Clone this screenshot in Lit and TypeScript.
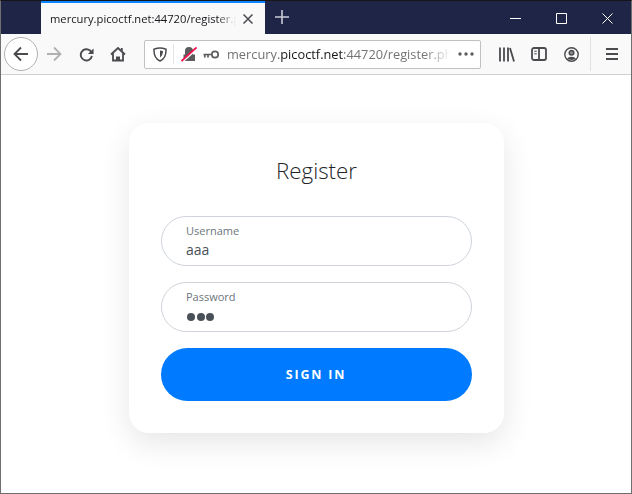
import { LitElement, css, html } from "lit";
import { customElement } from "lit/decorators.js";

@customElement("app-root")
export class AppRoot extends LitElement {
  static styles = css`
    :host {
      display: block;
      width: 632px;
      height: 494px;
      font-family: "Open Sans", "Noto Sans", sans-serif;
    }
    svg {
      display: block;
      fill: none;
      flex: none;
    }
    .window {
      position: relative;
      box-sizing: border-box;
      width: 632px;
      height: 494px;
      display: flex;
      flex-direction: column;
      border: 1px solid #6f6f6f;
      border-top-color: #15151c;
      background: #fff;
      overflow: hidden;
    }
    /* bits of the desktop that show through the window edge */
    .edge {
      position: absolute;
      width: 1px;
      background: #3f7a1e;
    }
    .edge.left {
      left: -1px;
    }
    .edge.right {
      right: -1px;
      background: #56642f;
    }
    .titlebar {
      height: 33px;
      flex: none;
      display: flex;
      background: #1f2546;
    }
    .tab {
      margin-left: 40px;
      width: 224px;
      box-sizing: border-box;
      background: #f9f9fa;
      border-top: 2px solid #0a84ff;
      display: flex;
      align-items: center;
      padding-left: 9px;
    }
    .tab-title {
      width: 186px;
      font-size: 11.2px;
      color: #17171a;
      white-space: nowrap;
      overflow: hidden;
      -webkit-mask-image: linear-gradient(90deg, #000 90%, transparent 100%);
      mask-image: linear-gradient(90deg, #000 90%, transparent 100%);
    }
    .tab-close {
      margin-left: 7px;
    }
    .new-tab {
      margin-left: 10px;
      margin-top: 9px;
    }
    .win-controls {
      margin-left: auto;
      display: flex;
      align-items: center;
      padding: 1px 18px 0 0;
      gap: 35px;
    }
    .toolbar {
      height: 41px;
      flex: none;
      box-sizing: border-box;
      display: flex;
      align-items: center;
      background: #f9f9fa;
      border-bottom: 1px solid #d0d0d2;
      padding-left: 3px;
    }
    .back {
      width: 32px;
      height: 32px;
      border: 1px solid #b1b1b3;
      border-radius: 50%;
      background: #fff;
      display: grid;
      place-items: center;
    }
    .nav {
      display: flex;
      align-items: center;
      gap: 16px;
      margin-left: 8px;
    }
    .reload {
      margin-left: 1px;
    }
    .urlbar {
      margin-left: 18px;
      width: 337px;
      height: 29px;
      box-sizing: border-box;
      background: #fff;
      border: 1px solid #c1c1c3;
      border-radius: 2px;
      display: flex;
      align-items: center;
      padding-left: 8px;
    }
    .sep {
      width: 1px;
      height: 20px;
      background: #e4e4e6;
      margin: 0 7px 0 6px;
    }
    .key {
      margin-left: 6px;
    }
    .url {
      width: 224px;
      margin-left: 8px;
      font-size: 12.8px;
      color: #737373;
      white-space: nowrap;
      overflow: hidden;
      -webkit-mask-image: linear-gradient(90deg, #000 88%, transparent 100%);
      mask-image: linear-gradient(90deg, #000 88%, transparent 100%);
    }
    .url b {
      font-weight: 400;
      color: #17171a;
    }
    .dots {
      margin-left: 7px;
    }
    .tools {
      display: flex;
      align-items: center;
      margin-left: 18px;
      gap: 16px;
    }
    .profile {
      margin-left: 1px;
    }
    .tool-sep {
      width: 1px;
      height: 34px;
      background: #e1e1e3;
      margin-left: 11px;
    }
    .menu {
      margin-left: 15px;
    }
    .page {
      flex: 1;
      display: flex;
      justify-content: center;
      align-items: flex-start;
      padding: 48px 0 0 1px;
      background: #fff;
    }
    .card {
      width: 375px;
      height: 310px;
      box-sizing: border-box;
      padding: 32px 32px 0;
      background: #fff;
      border-radius: 20px;
      box-shadow: 0 10px 30px rgba(0, 0, 0, 0.1);
    }
    h1 {
      margin: 0 0 29px;
      text-align: center;
      font-size: 22.3px;
      line-height: 32px;
      font-weight: 300;
      color: #212529;
    }
    .field {
      box-sizing: border-box;
      height: 50px;
      border: 1px solid #ced4da;
      border-radius: 25px;
      padding: 6px 24px 0;
      margin-bottom: 16px;
    }
    .field label {
      display: block;
      font-size: 11px;
      line-height: 16px;
      color: #6c757d;
    }
    .value {
      margin-top: 1px;
      font-size: 14px;
      line-height: 20px;
      color: #495057;
    }
    .dots-pw {
      display: flex;
      gap: 1.5px;
      padding: 8px 0 0 1px;
    }
    .dots-pw i {
      width: 8px;
      height: 8px;
      border-radius: 50%;
      background: #495057;
    }
    button {
      display: block;
      width: 100%;
      height: 53px;
      border: 0;
      border-radius: 27px;
      background: #007bff;
      color: #fff;
      font-family: inherit;
      font-size: 12.5px;
      font-weight: 700;
      letter-spacing: 1.8px;
      padding: 0 1px 1px 0;
    }
  `;

  render() {
    return html`
      <div class="window">
        <div class="titlebar">
          <div class="tab">
            <span class="tab-title">mercury.picoctf.net:44720/register.php</span>
            <svg class="tab-close" width="10" height="10" viewBox="0 0 10 10" stroke="#4a4a4f" stroke-width="1.500">
              <path d="M.5.5l9 9M9.500.5l-9 9" />
            </svg>
          </div>
          <svg class="new-tab" width="14" height="14" viewBox="0 0 14 14" stroke="#c9cbd6" stroke-width="1.600">
            <path d="M7 0v14M0 7h14" />
          </svg>
          <div class="win-controls">
            <svg width="11" height="11" viewBox="0 0 11 11" stroke="#fff"><path d="M0 5.500h11" /></svg>
            <svg width="11" height="11" viewBox="0 0 11 11" stroke="#fff"><path d="M.5.5h10v10H.5z" /></svg>
            <svg width="11" height="11" viewBox="0 0 11 11" stroke="#fff"><path d="M.5.5l10 10M10.500.5l-10 10" /></svg>
          </div>
        </div>
        <div class="toolbar">
          <div class="back">
            <svg width="16" height="16" viewBox="0 0 16 16" stroke="#4a4a4f" stroke-width="1.800">
              <path d="M15 8H1.500M8 1.500L1.500 8 8 14.500" />
            </svg>
          </div>
          <div class="nav">
            <svg width="16" height="16" viewBox="0 0 16 16" stroke="#b1b1b3" stroke-width="1.800">
              <path d="M1 8h13.500M8 1.500L14.500 8 8 14.500" />
            </svg>
            <svg class="reload" width="15" height="15" viewBox="0 0 16 16" stroke="#4a4a4f" stroke-width="2">
              <path d="M13.800 9.500A6 6 0 1 1 11.800 3.800L13.500 5.500" />
              <path d="M15.500 1.500V7.500H9.500z" fill="#4a4a4f" stroke="none" />
            </svg>
            <svg width="16" height="16" viewBox="0 0 16 16" stroke="#4a4a4f" stroke-width="1.800">
              <path d="M1 8.500L8 2l7 6.500M3 7v7.500h10V7M11.800 2v3.500" />
              <path d="M6 14.500V10.500h4v4z" fill="#4a4a4f" stroke="none" />
            </svg>
          </div>
          <div class="urlbar">
            <svg width="14" height="15" viewBox="0 0 14 15" stroke="#4a4a4f" stroke-width="1.500">
              <path d="M1 2.300C3 1.500 5 1 7 1s4 .5 6 1.300c.2 5-1.500 9.700-6 11.700C2.500 12 .8 7.300 1 2.300z" />
              <path d="M7 3.500c1 0 2 .2 3 .5 0 2.500-1 5-3 6.500z" fill="#4a4a4f" stroke="none" />
            </svg>
            <span class="sep"></span>
            <svg width="16" height="16" viewBox="0 0 16 16">
              <path d="M2.500 15V8.500h1.500V5a4 4 0 0 1 8 0v3.500h2V15z" fill="#5c5c5f" />
              <path d="M.5 16.500L15.500 3" stroke="#fff" stroke-width="2" />
              <path d="M.5 15L15.500 1.500" stroke="#f0134d" stroke-width="1.800" />
            </svg>
            <svg class="key" width="16" height="9" viewBox="0 0 16 9" stroke="#5c5c5f" stroke-width="1.700">
              <circle cx="12" cy="4.500" r="3.200" />
              <path d="M9 4.500H.5M1.800 4.500V7.500M5 4.500V7.500" />
            </svg>
            <span class="url">mercury.<b>picoctf.net</b>:44720/register.php</span>
            <svg class="dots" width="16" height="4" viewBox="0 0 16 4">
              <circle cx="2" cy="2" r="1.700" fill="#5c5c5f" />
              <circle cx="8" cy="2" r="1.700" fill="#5c5c5f" />
              <circle cx="14" cy="2" r="1.700" fill="#5c5c5f" />
            </svg>
          </div>
          <div class="tools">
            <svg width="16" height="15" viewBox="0 0 16 15" stroke="#4a4a4f" stroke-width="1.800">
              <path d="M1 .5v14M5 .5v14M9 .5v14M11 1l4 13.500" />
            </svg>
            <svg width="16" height="14" viewBox="0 0 16 14" stroke="#4a4a4f" stroke-width="1.800">
              <rect x="1" y="1" width="14" height="12" rx="2" />
              <path d="M8 1v12" />
              <path d="M3.200 4.200h2.600M3.200 6.800h2.600" stroke-width="1" />
            </svg>
            <svg class="profile" width="15" height="15" viewBox="0 0 15 15" stroke="#4a4a4f" stroke-width="1.400">
              <circle cx="7.500" cy="7.500" r="6.700" />
              <circle cx="7.500" cy="5.800" r="2.300" stroke-width="1.500" fill="#8a8a8d" />
              <path d="M3.200 11.800c1-2.700 7.600-2.700 8.600 0-1.500 1.500-7 1.500-8.600 0z" fill="#4a4a4f" stroke="none" />
            </svg>
          </div>
          <span class="tool-sep"></span>
          <svg class="menu" width="12" height="12" viewBox="0 0 12 12" stroke="#4a4a4f" stroke-width="1.800">
            <path d="M0 1h12M0 6h12M0 11h12" />
          </svg>
        </div>
        <div class="page">
          <div class="card">
            <h1>Register</h1>
            <div class="field">
              <label>Username</label>
              <div class="value">aaa</div>
            </div>
            <div class="field">
              <label>Password</label>
              <div class="dots-pw"><i></i><i></i><i></i></div>
            </div>
            <button>SIGN IN</button>
          </div>
        </div>
        <span class="edge left" style="top:49px;height:9px"></span>
        <span class="edge left" style="top:89px;height:13px"></span>
        <span class="edge right" style="top:45px;height:57px"></span>
      </div>
    `;
  }
}
